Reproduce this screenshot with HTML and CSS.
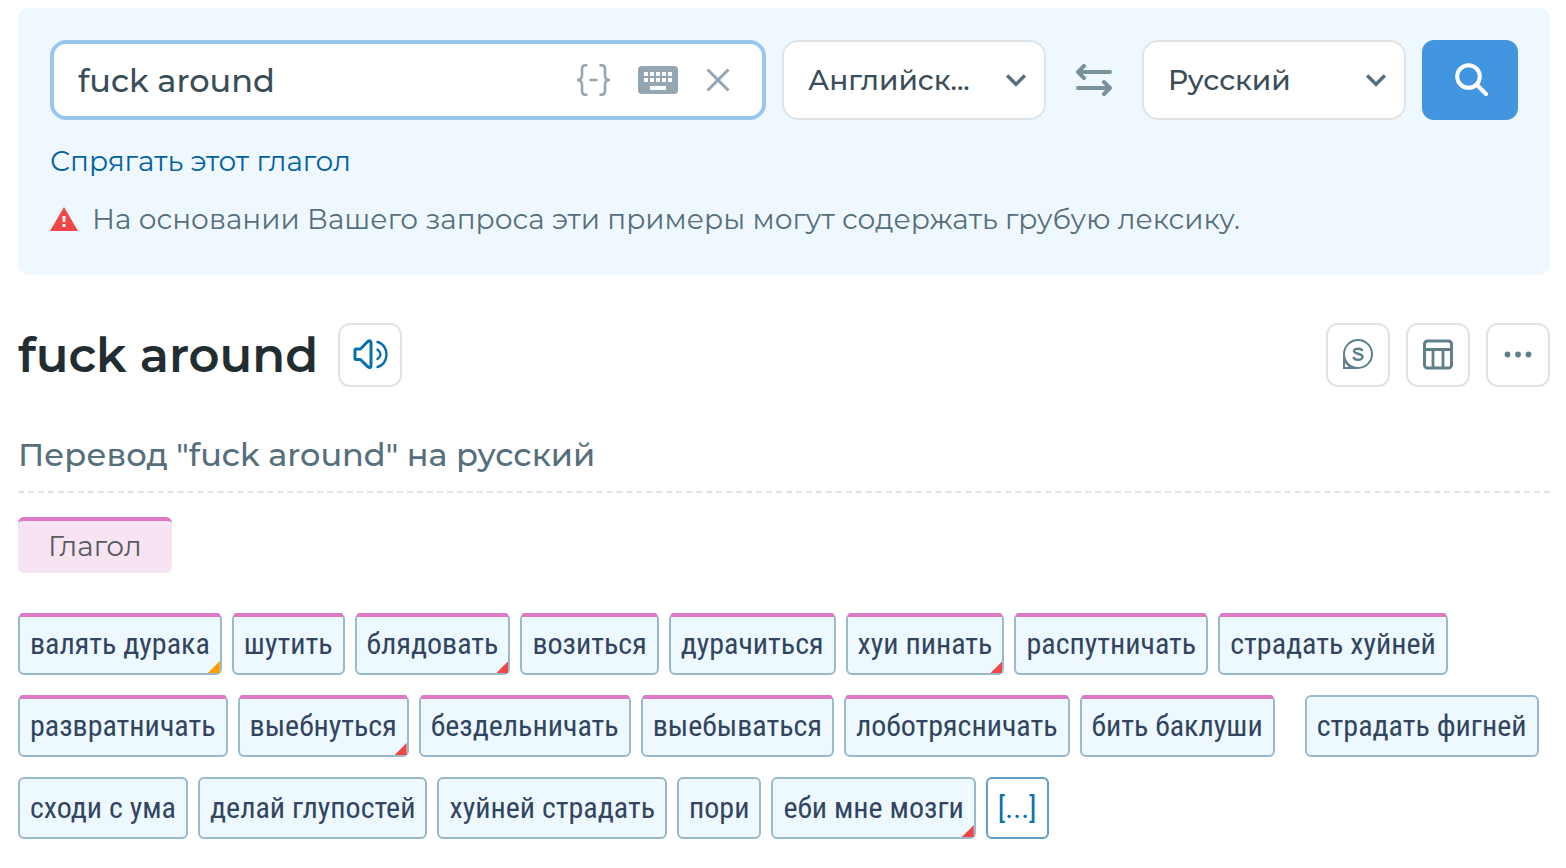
FILE: index.html
```html
<!DOCTYPE html>
<html lang="ru">
<head>
<meta charset="utf-8">
<meta name="viewport" content="width=device-width, initial-scale=1">
<title>Перевод "fuck around" на русский</title>
<link rel="stylesheet" href="styles.css">
</head>
<body>
<header class="search-panel">
  <form class="search-row">
    <div class="query">
      <input class="query-input" type="text" value="fuck around" aria-label="Поиск">
      <button class="tool" type="button" aria-label="Выражение">
        <svg width="34" height="32" viewBox="0 0 34 32" fill="none" stroke="#93a6b2" stroke-width="2.6"><path d="M11.500 1.300H9.500Q6 1.300 6 5V11.500Q6 16 1 16Q6 16 6 20.500V27Q6 30.700 9.500 30.700H11.500M23.500 1.300H25.500Q29 1.300 29 5V11.500Q29 16 34 16Q29 16 29 20.500V27Q29 30.700 25.500 30.700H23.500M13.500 16H21.500"/></svg>
      </button>
      <button class="tool" type="button" aria-label="Клавиатура">
        <svg width="40" height="28" viewBox="0 0 40 28"><rect width="40" height="28" rx="4" fill="#93a6b2"/><path fill="#fff" d="M6 6h4v4H6zM12 6h4v4h-4zM18 6h4v4h-4zM24 6h4v4h-4zM30 6h4v4h-4zM6 12h4v4H6zM12 12h4v4h-4zM18 12h4v4h-4zM24 12h4v4h-4zM30 12h4v4h-4zM12 20h16v4H12z"/></svg>
      </button>
      <button class="tool" type="button" aria-label="Очистить">
        <svg width="24" height="24" viewBox="0 0 24 24" fill="none" stroke="#93a6b2" stroke-width="3"><path d="M1.500 1.500L22.500 22.500M22.500 1.500L1.500 22.500"/></svg>
      </button>
    </div>
    <div class="lang">
      <select class="lang-select" aria-label="Исходный язык"><option>Английск...</option></select>
      <svg class="chevron" width="20" height="13" viewBox="0 0 20 13" fill="none" stroke="#566f7c" stroke-width="3.4"><path d="M1.200 1.500L10 10.300L18.800 1.500"/></svg>
    </div>
    <button class="swap" type="button" aria-label="Поменять языки">
      <svg width="36" height="32" viewBox="0 0 36 32" fill="none" stroke="#7a929d" stroke-width="4" stroke-linecap="round" stroke-linejoin="round"><path d="M34 8H2M8 2L2 8L8 14M2 24H34M28 18L34 24L28 30"/></svg>
    </button>
    <div class="lang">
      <select class="lang-select" aria-label="Язык перевода"><option>Русский</option></select>
      <svg class="chevron" width="20" height="13" viewBox="0 0 20 13" fill="none" stroke="#566f7c" stroke-width="3.4"><path d="M1.200 1.500L10 10.300L18.800 1.500"/></svg>
    </div>
    <button class="submit" type="submit" aria-label="Искать">
      <svg width="36" height="34" viewBox="0 0 36 34" fill="none" stroke="#fff" stroke-width="4" stroke-linecap="round"><circle cx="16.500" cy="13.500" r="11.300"/><path d="M25 22L34 31"/></svg>
    </button>
  </form>
  <a class="conjugate" href="#conjugate">Спрягать этот глагол</a>
  <p class="warning">
    <svg width="28" height="24" viewBox="0 0 28 24"><path fill="#f04646" d="M14 0L28 24H0z"/><path fill="#fff" d="M12.600 9h2.800v6h-2.800zM12.600 17h2.800v3h-2.800z"/></svg>
    <span>На основании Вашего запроса эти примеры могут содержать грубую лексику.</span>
  </p>
</header>
<main>
  <div class="title-row">
    <h1 class="title">fuck around</h1>
    <button class="square" type="button" aria-label="Прослушать">
      <svg width="36" height="32" viewBox="0 0 36 32" fill="none" stroke="#0970ae" stroke-width="3" stroke-linecap="round" stroke-linejoin="round"><path d="M4 10H8.500L15.500 2.800Q19 0.200 19 4V26.500Q19 30 15.500 27.500L8.500 20.500H4Q3 20.500 3 19.500V11Q3 10 4 10Z"/><path stroke-width="2.400" d="M25.500 10.500Q31.500 15.500 25.500 20M25.500 3C37.500 6 37.500 25 25.500 28"/></svg>
    </button>
    <div class="actions">
      <button class="square" type="button" aria-label="Синонимы">
        <svg width="32" height="32" viewBox="0 0 32 32" fill="none" stroke="#5f7f8a" stroke-width="2"><circle cx="16" cy="15" r="14"/><path d="M2 16V29H16M2 20Q5 27 12 29"/><path stroke-width="2.500" d="M20.300 12C19.500 9 12 8.800 12 12C12 15.500 20.500 14 20.500 17.800C20.500 21.800 12 21.500 11.500 17.800"/></svg>
      </button>
      <button class="square" type="button" aria-label="Таблица">
        <svg width="30" height="32" viewBox="0 0 30 32" fill="none" stroke="#5f7f8a" stroke-width="3"><rect x="1.500" y="2" width="27" height="27" rx="3"/><path d="M2 10.500H28"/><path stroke-width="2.800" d="M10 11V29M20 11V29"/></svg>
      </button>
      <button class="square" type="button" aria-label="Ещё">
        <svg width="28" height="8" viewBox="0 0 28 8" fill="#5f7f8a"><circle cx="3.500" cy="3.500" r="2.900"/><circle cx="14" cy="3.500" r="2.900"/><circle cx="24.500" cy="3.500" r="2.900"/></svg>
      </button>
    </div>
  </div>
  <h2 class="subtitle">Перевод "fuck around" на русский</h2>
  <button class="pos" type="button">Глагол</button>
  <div class="chips">
    <a class="chip verb mild" href="#t1">валять дурака</a>
    <a class="chip verb" href="#t2">шутить</a>
    <a class="chip verb rude" href="#t3">блядовать</a>
    <a class="chip verb" href="#t4">возиться</a>
    <a class="chip verb" href="#t5">дурачиться</a>
    <a class="chip verb rude" href="#t6">хуи пинать</a>
    <a class="chip verb" href="#t7">распутничать</a>
    <a class="chip verb" href="#t8">страдать хуйней</a>
    <a class="chip verb" href="#t9">развратничать</a>
    <a class="chip verb rude" href="#t10">выебнуться</a>
    <a class="chip verb" href="#t11">бездельничать</a>
    <a class="chip verb" href="#t12">выебываться</a>
    <a class="chip verb" href="#t13">лоботрясничать</a>
    <a class="chip verb group-end" href="#t14">бить баклуши</a>
    <a class="chip" href="#t15">страдать фигней</a>
    <a class="chip" href="#t16">сходи с ума</a>
    <a class="chip" href="#t17">делай глупостей</a>
    <a class="chip" href="#t18">хуйней страдать</a>
    <a class="chip" href="#t19">пори</a>
    <a class="chip rude" href="#t20">еби мне мозги</a>
    <button class="chip more" type="button">[...]</button>
  </div>
</main>
</body>
</html>
```
FILE: styles.css
```css
* { box-sizing: border-box; }
body {
  margin: 0;
  padding: 8px 16px 28px 18px;
  background: #fff;
  font-family: Montserrat, Inter, "Noto Sans", sans-serif;
  color: #3a4e59;
}
button, input, select { font: inherit; color: inherit; margin: 0; }
button { display: flex; align-items: center; justify-content: center; padding: 0; border: 0; background: none; cursor: pointer; }
svg { display: block; flex: none; }
.search-panel { padding: 32px 32px 37px; border-radius: 10px; background: #f0f8ff; }
.search-row { display: flex; align-items: stretch; height: 80px; }
.query {
  flex: 1;
  min-width: 0;
  display: flex;
  align-items: center;
  gap: 28px;
  margin-right: 16px;
  padding: 0 32px 0 24px;
  border: 4px solid #9ac7ee;
  border-radius: 16px;
  background: #fff;
}
.query-input { flex: 1; min-width: 0; padding: 0; border: 0; outline: 0; background: none; font-size: 32px; font-weight: 500; }
.lang { flex: 0 0 264px; display: grid; align-items: center; }
.lang-select, .chevron { grid-area: 1 / 1; }
.lang-select {
  width: 100%;
  height: 100%;
  padding: 0 56px 0 24px;
  appearance: none;
  border: 2px solid #dfe4e8;
  border-radius: 16px;
  background: #fff;
  font-size: 28px;
  font-weight: 500;
}
.chevron { justify-self: end; margin-right: 20px; pointer-events: none; }
.swap { flex: 0 0 96px; }
.submit { flex: 0 0 96px; margin-left: 16px; border-radius: 12px; background: #4296e0; }
.conjugate { display: table; margin-top: 22px; color: #0062a3; font-size: 28px; line-height: 38px; text-decoration: none; }
.warning { display: flex; align-items: center; gap: 14px; margin: 20px 0 0; color: #566f7c; font-size: 28px; line-height: 38px; }
.title-row { display: flex; align-items: center; margin-top: 48px; }
.title { margin: 0 20px 0 0; color: #222d31; font-size: 48px; line-height: 64px; font-weight: 600; }
.square { width: 64px; height: 64px; border: 2px solid #dfe4e8; border-radius: 12px; background: #fff; }
.actions { display: flex; gap: 16px; margin-left: auto; }
.subtitle {
  margin: 44px 0 24px;
  padding-bottom: 12px;
  border-bottom: 2px dashed #dfe4e8;
  color: #566f7c;
  font-size: 32px;
  line-height: 48px;
  font-weight: 500;
}
.pos { height: 56px; padding: 0 30px 2px; border-top: 4px solid #dc7ac6; border-radius: 6px; background: #f7e4f3; color: #5a5a5c; font-size: 28px; }
.chips { display: flex; flex-wrap: wrap; gap: 20px 10px; margin-top: 40px; }
.chip {
  position: relative;
  height: 62px;
  padding: 0 10px;
  border: 2px solid #9bb9ce;
  border-radius: 6px;
  background: #edf8ff;
  color: #314560;
  font-family: "Roboto Condensed", "Liberation Sans Narrow", Roboto, sans-serif;
  font-size: 30px;
  line-height: 58px;
  text-decoration: none;
  white-space: nowrap;
}
.verb::before {
  content: "";
  position: absolute;
  top: -2px;
  left: 0;
  right: 0;
  height: 4px;
  border-radius: 2px 2px 0 0;
  background: #dc7ac6;
}
.mild::after, .rude::after {
  content: "";
  position: absolute;
  right: 0;
  bottom: 0;
  width: 12px;
  height: 12px;
  background: #f04646;
  clip-path: polygon(100% 0, 100% 100%, 0 100%);
}
.mild::after { background: #ff9c00; }
.group-end { margin-right: 20px; }
.more { border-color: #5ea0c6; background: #fff; color: #0970ae; }
```
